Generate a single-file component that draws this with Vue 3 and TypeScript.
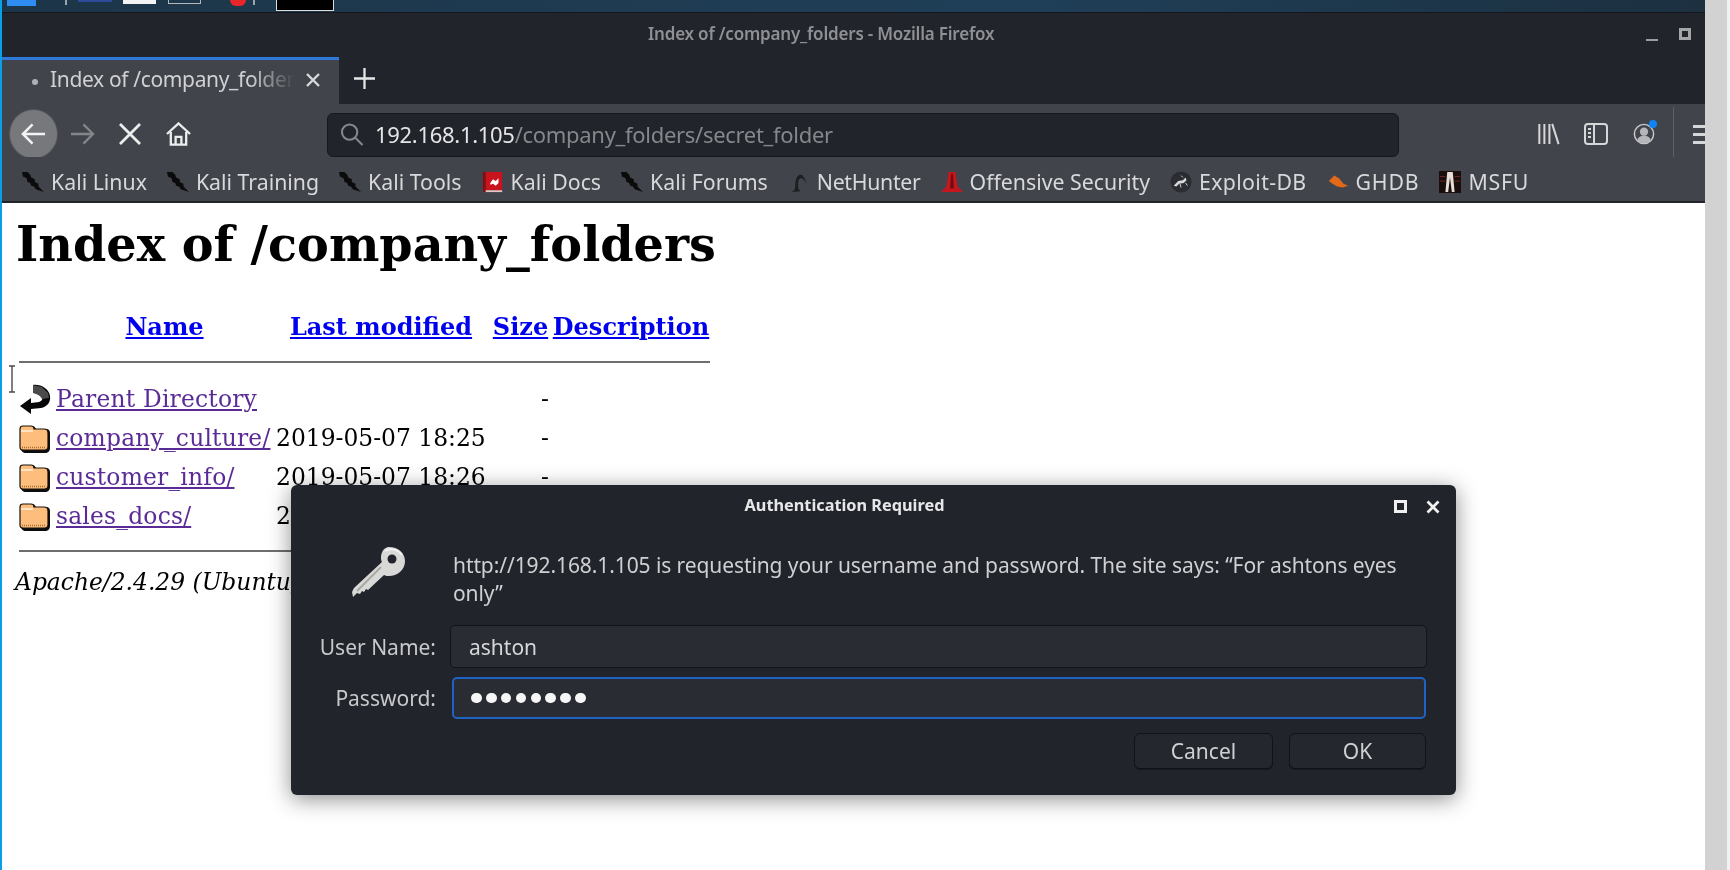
<template>
  <div class="desktop">
    <div class="window">
      <!-- strip of the desktop panel, cut off at the top of the shot -->
      <div class="panel">
        <span class="p-app"></span>
        <span class="p-sep"></span>
        <span class="p-navy"></span>
        <span class="p-white"></span>
        <span class="p-outline"></span>
        <span class="p-red"></span>
        <span class="p-sep second"></span>
        <span class="p-black"></span>
      </div>

      <div class="titlebar">
        <span class="title">Index of /company_folders - Mozilla Firefox</span>
        <span class="win-min"></span>
        <span class="win-max"></span>
      </div>

      <div class="tabstrip">
        <div class="tab">
          <span class="tab-dot"></span>
          <span class="tab-text">Index of /company_folders</span>
          <svg class="tab-close" viewBox="0 0 14 14"><path d="M1 1l12 12M13 1L1 13" /></svg>
        </div>
        <svg class="tab-new" viewBox="0 0 22 22"><path d="M11 0v22M0 11h22" /></svg>
      </div>

      <div class="navbar">
        <div class="back">
          <svg viewBox="0 0 26 24"><path d="M25 12H3M12 2L2 12l10 10" /></svg>
        </div>
        <svg class="forward" viewBox="0 0 26 24"><path d="M1 12h22M14 2l10 10-10 10" /></svg>
        <svg class="stop" viewBox="0 0 22 22"><path d="M1 1l20 20M21 1L1 21" /></svg>
        <svg class="home" viewBox="0 0 26 24">
          <path d="M1 12L13 1l12 11" />
          <path d="M5 10v13h16V10" />
          <path d="M10 23v-8h6v8" />
        </svg>
        <div class="urlbar">
          <svg class="search" viewBox="0 0 24 24">
            <circle cx="9.500" cy="9.500" r="8" />
            <path d="M15 15l8 8" />
          </svg>
          <span class="url"><span class="host">192.168.1.105</span>/company_folders/secret_folder</span>
        </div>
        <div class="nav-right">
          <svg class="library" viewBox="0 0 24 24"><path d="M2 1v22M7.500 1v22M13 1v22M16 1l7 22" /></svg>
          <svg class="sidebar" viewBox="0 0 24 22">
            <rect x="1" y="1" width="22" height="20" rx="3" />
            <path d="M10 1v20M4 6h3M4 10h3M4 14h3" />
          </svg>
          <div class="account">
            <svg viewBox="0 0 24 24">
              <circle cx="12" cy="12" r="10.500" />
              <circle cx="12" cy="9.500" r="4.500" class="solid" />
              <path d="M4.500 19c1.500-4 4-5 7.500-5s6 1 7.500 5c-2 2-4.500 3-7.500 3s-5.500-1-7.500-3z" class="solid" />
            </svg>
            <span class="account-dot"></span>
          </div>
          <span class="nav-sep"></span>
          <div class="burger"><i></i><i></i><i></i></div>
        </div>
      </div>

      <div class="bookmarks">
        <div v-for="b in bookmarks" :key="b.label" class="bookmark" :class="b.icon">
          <svg v-if="b.icon === 'kali'" viewBox="0 0 24 24" class="bm-icon">
            <path d="M0 1l6 0 3 3 1 3 4 2 0 3 4 2 0 3 6 6-9-3-2-3-3-1-1-3-3-1-1-4-4-2z" fill="#0b0b0c" />
          </svg>
          <svg v-else-if="b.icon === 'docs'" viewBox="0 0 24 24" class="bm-icon">
            <rect x="1" y="1" width="21" height="20" fill="#c8141c" />
            <rect x="1" y="21" width="21" height="2" fill="#e9c4c4" />
            <rect x="1" y="1" width="3" height="22" fill="#7c1014" />
            <path d="M9 13l3-4 3 2 3-3v5l-3 3-3-2-3 1z" fill="#fff" />
          </svg>
          <svg v-else-if="b.icon === 'hunter'" viewBox="0 0 24 24" class="bm-icon">
            <path d="M3 23c4-1 5-3 5-8 0-6 2-11 6-11 3 0 4 5 7 10-3-3-4-6-7-6-3 0-3 5-3 9 0 3 1 4 3 5z" fill="#1d1e20" />
          </svg>
          <svg v-else-if="b.icon === 'offsec'" viewBox="0 0 24 24" class="bm-icon">
            <path d="M8 1h8l1 9 1 7 6 6H0l6-6 1-7z" fill="#c4161c" />
            <path d="M11 3h2l1 16h-4z" fill="#6e0d10" />
          </svg>
          <svg v-else-if="b.icon === 'exploit'" viewBox="0 0 24 24" class="bm-icon">
            <circle cx="12" cy="12" r="11.500" fill="#2a2c31" />
            <path d="M4 16l5-5 5-1 3-3 1 3-3 3-5 1-3 3z" fill="#d6d8da" />
            <path d="M14 7l-2-2M17 13l2 3M11 14l1 4" stroke="#d6d8da" fill="none" />
          </svg>
          <svg v-else-if="b.icon === 'ghdb'" viewBox="0 0 24 24" class="bm-icon">
            <path d="M2 11l6-6 5 3 5 6 5 2-6 2-6-1-5-3z" fill="#e2681a" />
          </svg>
          <svg v-else viewBox="0 0 24 24" class="bm-icon">
            <rect width="24" height="24" fill="#1a0d0c" />
            <path d="M9 1h6l2 22h-3l-2-16-2 16H7z" fill="#e8dfd8" />
            <path d="M1 6h6M1 11h6M17 6h6M17 11h6" stroke="#6e2a22" />
          </svg>
          <span>{{ b.label }}</span>
        </div>
      </div>

      <div class="page">
        <h1>Index of /company_folders</h1>
        <table>
          <tbody>
            <tr class="head">
              <th></th>
              <th><a class="col-link">Name</a></th>
              <th><a class="col-link">Last modified</a></th>
              <th><a class="col-link">Size</a></th>
              <th><a class="col-link">Description</a></th>
            </tr>
            <tr class="rule"><th colspan="5"><hr /></th></tr>
            <tr v-for="row in rows" :key="row.name">
              <td class="ico">
                <svg v-if="row.parent" viewBox="0 0 32 32">
                  <path d="M14 2c8-1 16 4 17 11 1 6-3 11-9 12l-10 1v5L1 23l11-8v5l8-1c3-1 4-3 3-5-1-3-5-5-9-6z" fill="#060606" />
                  <path d="M14 2l9 2 6 6 1 5-7 1c-1-3-5-5-9-6z" fill="#4a4a4a" />
                </svg>
                <svg v-else viewBox="0 0 32 32">
                  <path d="M2 8c0-3 1-4 4-4h7c2 0 3 1 4 3h10c3 0 4 2 4 4v15c0 3-2 5-5 5H7c-3 0-5-2-5-5z" fill="#0c0c0c" />
                  <path d="M1 7c0-2 1-3 3-3h8c2 0 3 1 3 3h10c3 0 4 2 4 4v14c0 2-1 3-3 3H4c-2 0-3-1-3-3z" fill="#fdbd7d" stroke="#1a1208" stroke-width="1.200" />
                  <path d="M2 9h12" stroke="#fff0dc" stroke-width="1.500" />
                  <path d="M3 25.500h24" stroke="#a8702e" stroke-width="1.500" stroke-dasharray="1 1" />
                </svg>
              </td>
              <td class="name"><a class="row-link">{{ row.name }}</a></td>
              <td class="date">{{ row.date }}</td>
              <td class="size">-</td>
              <td></td>
            </tr>
            <tr class="rule bottom"><th colspan="5"><hr /></th></tr>
          </tbody>
        </table>
        <address>Apache/2.4.29 (Ubuntu) Server at 192.168.1.105 Port 80</address>

        <svg class="ibeam" viewBox="0 0 8 28"><path d="M1 1h6M4 1v26M1 27h6" /></svg>

        <div class="dialog">
          <div class="dlg-title">
            <span>Authentication Required</span>
            <span class="dlg-max"></span>
            <svg class="dlg-close" viewBox="0 0 14 14"><path d="M1.500 1.500l11 11M12.500 1.500l-11 11" /></svg>
          </div>
          <div class="dlg-body">
            <div class="dlg-icon">
              <svg viewBox="0 0 56 54">
                <path d="M38 2c9 0 16 6 16 14 0 9-8 15-16 15-2 0-3 0-5-1L17 45l-2-1-2 3-2-1-2 3-3-1-4 4-1-5 2-4L31 17c-1-2-1-3-1-4 0-6 3-11 8-11z" fill="#d8d8d6" />
                <circle cx="41" cy="14" r="4.500" fill="#22242c" />
                <path d="M34 6c5-3 13-2 17 4" stroke="#f2f2f0" stroke-width="2" fill="none" />
                <path d="M30 22L6 46" stroke="#a8a8a6" stroke-width="2" fill="none" />
              </svg>
            </div>
            <div class="dlg-content">
              <p class="dlg-msg">http://192.168.1.105 is requesting your username and password. The site says: “For ashtons eyes only”</p>
            </div>
            <label class="dlg-label first">User Name:</label>
            <div class="dlg-input first">ashton</div>
            <label class="dlg-label">Password:</label>
            <div class="dlg-input focused">
              <i v-for="n in 8" :key="n" class="dot"></i>
            </div>
          </div>
          <div class="dlg-actions">
            <button class="cancel">Cancel</button>
            <button class="ok">OK</button>
          </div>
        </div>
      </div>
    </div>
    <div class="edge"></div>
  </div>
</template>

<script setup lang="ts">
const bookmarks = [
  { label: "Kali Linux", icon: "kali" },
  { label: "Kali Training", icon: "kali" },
  { label: "Kali Tools", icon: "kali" },
  { label: "Kali Docs", icon: "docs" },
  { label: "Kali Forums", icon: "kali" },
  { label: "NetHunter", icon: "hunter" },
  { label: "Offensive Security", icon: "offsec" },
  { label: "Exploit-DB", icon: "exploit" },
  { label: "GHDB", icon: "ghdb" },
  { label: "MSFU", icon: "msfu" },
];

const rows = [
  { name: "Parent Directory", date: "", parent: true },
  { name: "company_culture/", date: "2019-05-07 18:25", parent: false },
  { name: "customer_info/", date: "2019-05-07 18:26", parent: false },
  { name: "sales_docs/", date: "2019-05-07 18:26", parent: false },
];
</script>

<style>
html,
body {
  margin: 0;
  background: #fff;
  overflow: hidden;
}
</style>

<style scoped>
.desktop {
  width: 1730px;
  height: 870px;
  display: flex;
  overflow: hidden;
  background: #d2d2d2;
  font-family: "Noto Sans", sans-serif;
  filter: blur(0.4px);
}

.window {
  width: 1703px;
  flex: none;
  border-left: 2px solid #0a9fe6;
  display: flex;
  flex-direction: column;
  background: #fff;
}

.edge {
  margin-left: 22px;
  width: 3px;
  background: #eef3f8;
}

/* Panel */
.panel {
  height: 13px;
  flex: none;
  display: flex;
  align-items: flex-start;
  background: linear-gradient(90deg, #1d3548, #1f3f58 60%, #1c3040);
  border-bottom: 1px solid #15171c;
  box-sizing: border-box;
}

.p-app {
  width: 29px;
  height: 6px;
  margin-left: 5px;
  background: #2f8cf0;
}

.p-sep {
  width: 2px;
  height: 5px;
  margin-left: 29px;
  background: #9aa4ad;
}

.p-sep.second {
  margin-left: 7px;
}

.p-navy {
  width: 34px;
  height: 2px;
  margin-left: 11px;
  background: #2f4a9c;
}

.p-white {
  width: 33px;
  height: 4px;
  margin-left: 11px;
  background: #f4f4f4;
}

.p-outline {
  width: 33px;
  height: 4px;
  margin-left: 12px;
  box-sizing: border-box;
  border: 1px solid #b5b8bb;
  border-top: 0;
}

.p-red {
  width: 16px;
  height: 6px;
  margin-left: 29px;
  background: #e8252a;
  border-radius: 0 0 8px 8px;
}

.p-black {
  width: 58px;
  height: 11px;
  margin-left: 21px;
  box-sizing: border-box;
  background: #000;
  border: 1px solid #dcdcdc;
  border-top: 0;
}

/* Title */
.titlebar {
  height: 44px;
  flex: none;
  position: relative;
  display: flex;
  align-items: center;
  background: #22242c;
}

.title {
  margin-left: 646px;
  width: 998px;
  flex: none;
  font-size: 17px;
  font-weight: 600;
  color: #8e9094;
  margin-top: -4px;
  letter-spacing: -0.2px;
}

.win-min {
  width: 12px;
  height: 2px;
  margin-top: 10px;
  background: #9b9da1;
}

.win-max {
  width: 12px;
  height: 12px;
  margin-left: 21px;
  margin-top: -3px;
  box-sizing: border-box;
  border: 3px solid #a3a5a9;
}

/* Tabs */
.tabstrip {
  height: 47px;
  flex: none;
  display: flex;
  align-items: center;
  background: #22242c;
}

.tab {
  width: 337px;
  height: 100%;
  flex: none;
  box-sizing: border-box;
  display: flex;
  align-items: center;
  padding: 0 0 1px 30px;
  border-top: 3px solid #2f7ad8;
  background: #42444b;
  color: #d0d1d3;
}

.tab-dot {
  width: 6px;
  height: 6px;
  flex: none;
  border-radius: 50%;
  background: #aeb0b3;
}

.tab-text {
  width: 245px;
  flex: none;
  margin-left: 12px;
  overflow: hidden;
  white-space: nowrap;
  font-size: 21px;
  margin-top: -6px;
  letter-spacing: -0.35px;
  -webkit-mask-image: linear-gradient(90deg, #000 82%, transparent 100%);
  mask-image: linear-gradient(90deg, #000 82%, transparent 100%);
}

.tab-close {
  width: 14px;
  height: 14px;
  flex: none;
  margin-left: 11px;
  margin-top: -4px;
  fill: none;
  stroke: #d8d9db;
  stroke-width: 2.400;
}

.tab-new {
  width: 21px;
  height: 21px;
  margin-left: 15px;
  margin-top: -4px;
  fill: none;
  stroke: #e6e7e8;
  stroke-width: 2.400;
}

/* Nav */
.navbar {
  height: 53px;
  flex: none;
  display: flex;
  align-items: center;
  background: #42444b;
}

.back {
  width: 47px;
  height: 48px;
  flex: none;
  margin-left: 8px;
  margin-top: 7px;
  display: flex;
  align-items: center;
  justify-content: center;
  border-radius: 50%;
  background: #77787c;
  box-shadow: 0 0 0 1px #55575c;
}

.back svg {
  width: 25px;
  height: 24px;
  fill: none;
  stroke: #f2f2f3;
  stroke-width: 2.600;
}

.forward {
  width: 25px;
  height: 24px;
  flex: none;
  margin-left: 13px;
  fill: none;
  stroke: #84868a;
  stroke-width: 2.400;
  margin-top: 7px;
}

.stop {
  width: 22px;
  height: 22px;
  flex: none;
  margin-left: 24px;
  fill: none;
  stroke: #eceded;
  stroke-width: 2.800;
  margin-top: 7px;
}

.home {
  width: 25px;
  height: 24px;
  flex: none;
  margin-left: 25px;
  fill: none;
  stroke: #eceded;
  stroke-width: 2.400;
  margin-top: 7px;
}

.urlbar {
  width: 1072px;
  height: 44px;
  flex: none;
  margin-left: 136px;
  margin-top: 8px;
  box-sizing: border-box;
  display: flex;
  align-items: center;
  border: 1px solid #17181d;
  border-radius: 6px;
  background: #22242c;
}

.search {
  width: 24px;
  height: 23px;
  flex: none;
  margin-left: 12px;
  fill: none;
  stroke: #85878b;
  stroke-width: 2.200;
}

.url {
  margin-left: 11px;
  margin-top: -2px;
  font-size: 22px;
  color: #85878b;
  white-space: nowrap;
  letter-spacing: -0.3px;
}

.host {
  color: #e4e5e6;
}

.nav-right {
  display: flex;
  align-items: center;
  margin-left: 138px;
  margin-top: 7px;
}

.library {
  width: 23px;
  height: 22px;
  flex: none;
  fill: none;
  stroke: #d6d7d9;
  stroke-width: 2.200;
}

.sidebar {
  width: 24px;
  height: 22px;
  flex: none;
  margin-left: 24px;
  fill: none;
  stroke: #d6d7d9;
  stroke-width: 2;
}

.account {
  width: 22px;
  height: 22px;
  flex: none;
  margin-left: 25px;
  position: relative;
}

.account svg {
  display: block;
  width: 22px;
  height: 22px;
  fill: none;
  stroke: #c8c9cb;
  stroke-width: 1.600;
}

.account .solid {
  fill: #b5b6b9;
  stroke: none;
}

.account-dot {
  position: absolute;
  top: -3px;
  right: -2px;
  width: 8px;
  height: 8px;
  border-radius: 50%;
  background: #0f84f5;
}

.nav-sep {
  width: 1px;
  height: 51px;
  flex: none;
  margin-left: 18px;
  margin-top: -4px;
  background: #5e6065;
}

.burger {
  width: 12px;
  flex: none;
  margin-left: 19px;
  overflow: hidden;
  display: flex;
  flex-direction: column;
  gap: 5px;
}

.burger i {
  display: block;
  width: 20px;
  height: 3px;
  background: #d6d7d9;
}

/* Bookmarks */
.bookmarks {
  height: 46px;
  flex: none;
  box-sizing: border-box;
  display: flex;
  align-items: center;
  padding: 5px 0 0 20px;
  background: #42444b;
  border-bottom: 2px solid #22242a;
  color: #d8d9db;
  font-size: 21.300px;
}

.bookmark {
  display: flex;
  align-items: center;
  gap: 7px;
  margin-right: 20px;
  white-space: nowrap;
}

.bookmark.hunter {
  letter-spacing: -0.3px;
}

.bookmark.exploit {
  letter-spacing: 0.35px;
}

.bookmark.ghdb,
.bookmark.msfu {
  letter-spacing: 0.8px;
}

.bm-icon {
  width: 22px;
  height: 22px;
  flex: none;
}

/* Page */
.page {
  flex: 1;
  position: relative;
  color: #000;
  font-family: "DejaVu Serif", serif;
  font-size: 23.400px;
  padding: 0 0 0 11px;
}

h1 {
  margin: 16px 0 0 3px;
  font-size: 47.700px;
  line-height: 50px;
  font-weight: 700;
}

table {
  margin: 37px 0 0 6px;
  border-collapse: collapse;
  table-layout: fixed;
  width: 691px;
}

td,
th {
  padding: 0;
  height: 39px;
  white-space: nowrap;
  text-align: left;
}

tr.head th {
  height: 40px;
  text-align: center;
  font-size: 24px;
  font-weight: 700;
}

tr.head th:first-child {
  width: 37px;
}

tr.head th:nth-child(2) {
  width: 217px;
  text-align: center;
}

tr.head th:nth-child(3) {
  width: 216px;
}

tr.head th:nth-child(4) {
  width: 63px;
}

.col-link {
  color: #0000ee;
  text-decoration: underline;
}

.row-link {
  color: #5a2a96;
  text-decoration: underline;
  letter-spacing: 0.2px;
}

.rule th {
  height: 31px;
  padding-bottom: 2px;
}

.rule hr {
  margin: 0;
  height: 2px;
  border: 0;
  background: #6e6e6e;
}

.rule.bottom th {
  padding-bottom: 0;
}

.ico svg {
  display: block;
  width: 32px;
  height: 32px;
}

.date {
  padding-left: 3px;
}

.size {
  padding-left: 52px;
}

address {
  margin: 1px 0 0 2px;
  font-style: italic;
  line-height: 30px;
  white-space: nowrap;
}

.ibeam {
  position: absolute;
  left: 6px;
  top: 162px;
  width: 8px;
  height: 28px;
  fill: none;
  stroke: #4a4a4a;
  stroke-width: 1.400;
}

/* Dialog */
.dialog {
  position: absolute;
  left: 289px;
  top: 282px;
  width: 1165px;
  height: 310px;
  box-sizing: border-box;
  border-radius: 6px;
  background: #22242c;
  color: #cfd0d2;
  font-family: "Noto Sans", sans-serif;
  font-size: 21px;
  box-shadow: 0 4px 22px rgba(0, 0, 0, 0.45);
}

.dlg-title {
  height: 40px;
  padding-bottom: 2px;
  padding-right: 58px;
  position: relative;
  display: flex;
  align-items: center;
  justify-content: center;
  font-size: 16.300px;
  font-weight: 700;
  color: #e6e7e8;
}

.dlg-max {
  position: absolute;
  left: 1103px;
  top: 15px;
  width: 13px;
  height: 13px;
  box-sizing: border-box;
  border: 3px solid #f0f0f1;
}

.dlg-close {
  position: absolute;
  left: 1135px;
  top: 15px;
  width: 14px;
  height: 14px;
  fill: none;
  stroke: #f0f0f1;
  stroke-width: 2.800;
}

.dlg-body {
  display: grid;
  grid-template-columns: 145px 977px;
  column-gap: 14px;
  padding-top: 18px;
}

.dlg-icon {
  display: flex;
  justify-content: flex-end;
}

.dlg-icon svg {
  width: 56px;
  height: 54px;
  margin-right: 29px;
}

.dlg-msg {
  margin: 6px 0 0 3px;
  width: 960px;
  line-height: 28px;
  letter-spacing: -0.09px;
}

.dlg-label {
  display: flex;
  align-items: center;
  justify-content: flex-end;
  margin-top: 9px;
  color: #c8c9cb;
}

.dlg-label.first {
  margin-top: 18px;
}

.dlg-input {
  height: 43px;
  box-sizing: border-box;
  display: flex;
  align-items: center;
  gap: 4.200px;
  padding-left: 18px;
  border: 1px solid #131419;
  border-radius: 5px;
  background: #2a2c33;
  color: #d6d7d9;
  margin-top: 9px;
}

.dlg-input.first {
  margin-top: 18px;
}

.dlg-input.focused {
  border: 2px solid #1f62c4;
  height: 42px;
  margin-top: 9px;
  margin-left: 2px;
  width: 974px;
  padding-left: 17px;
}

.dot {
  width: 10.700px;
  height: 10.700px;
  border-radius: 50%;
  background: #f6f6f6;
}

.dlg-actions {
  display: flex;
  justify-content: flex-end;
  gap: 16px;
  margin-top: 14px;
  padding-right: 30px;
}

.dlg-actions button {
  height: 36px;
  box-sizing: border-box;
  border: 1px solid #121318;
  border-radius: 6px;
  background: #25272f;
  color: #cfd0d2;
  font-family: "Noto Sans", sans-serif;
  font-size: 21px;
  padding: 0;
  box-shadow: 0 1px 0 #16171b;
}

.cancel {
  width: 139px;
}

.ok {
  width: 137px;
}
</style>
